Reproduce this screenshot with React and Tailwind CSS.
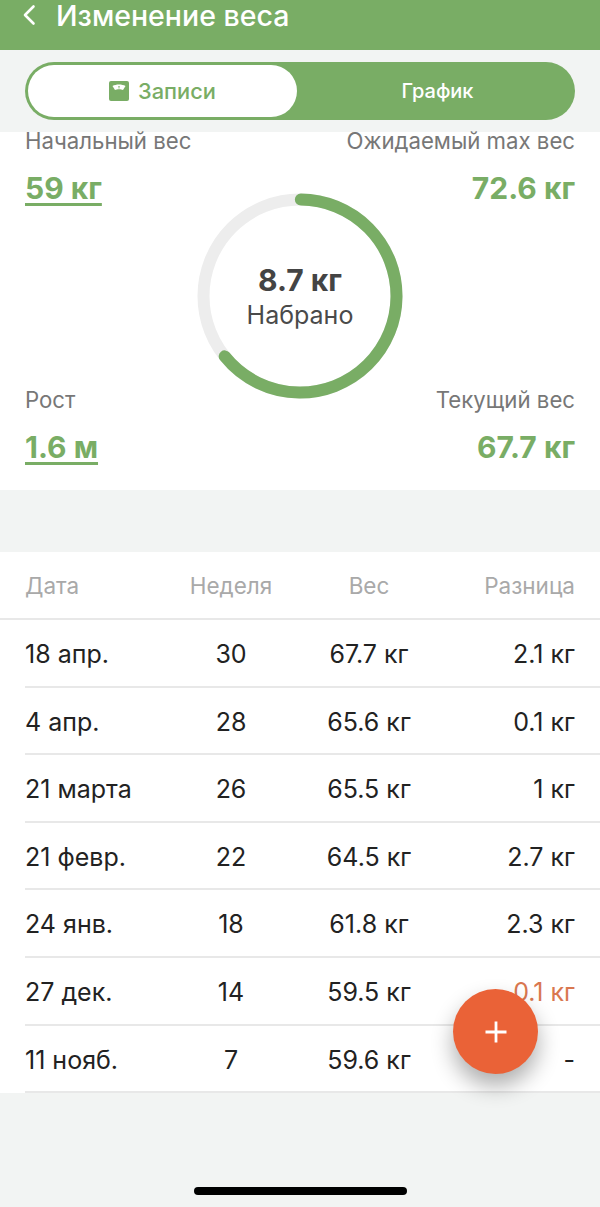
const rows = [
  ["18 апр.", "30", "67.7 кг", "2.1 кг"],
  ["4 апр.", "28", "65.6 кг", "0.1 кг"],
  ["21 марта", "26", "65.5 кг", "1 кг"],
  ["21 февр.", "22", "64.5 кг", "2.7 кг"],
  ["24 янв.", "18", "61.8 кг", "2.3 кг"],
  ["27 дек.", "14", "59.5 кг", "0.1 кг", true],
  ["11 нояб.", "7", "59.6 кг", "-"],
];

function Ring() {
  const r = 96.5;
  const c = 2 * Math.PI * r;
  return (
    <div className="relative h-[206px] w-[206px] shrink-0">
      <svg width="206" height="206" viewBox="0 0 206 206">
        <circle cx="103" cy="103" r={r} fill="none" stroke="#ededed" strokeWidth="12" />
        <circle
          cx="103"
          cy="103"
          r={r}
          fill="none"
          stroke="#79ad65"
          strokeWidth="12"
          strokeLinecap="round"
          strokeDasharray={`${c * 0.64} ${c}`}
          transform="rotate(-89.5 103 103)"
        />
      </svg>
      <div className="absolute inset-0 flex flex-col items-center justify-center pt-[3px]">
        <div className="text-[30px] leading-[34px] font-bold text-[#444444]">8.7 кг</div>
        <div className="text-[25px] leading-[36px] text-[#4a4a4a]">Набрано</div>
      </div>
    </div>
  );
}

function Stat({ label, value, right, link, top }) {
  return (
    <div className={(right ? "text-right " : "text-left ") + (top ? "-mt-[1px]" : "")}>
      <div className="text-[22.2px] leading-[20px] text-[#777777] whitespace-nowrap">{label}</div>
      <div
        className={
          "mt-[17px] text-[30px] leading-[40px] font-bold text-[#79ad65] whitespace-nowrap " +
          (link ? "underline decoration-[3px] underline-offset-[4px]" : "")
        }
      >
        {value}
      </div>
    </div>
  );
}

export default function App() {
  return (
    <div className="flex h-[1207px] w-[600px] flex-col overflow-hidden bg-[#f2f4f3] font-['Inter','Noto_Sans',sans-serif]">
      <header className="flex h-[50px] shrink-0 items-start bg-[#79ad65] pl-[21px]">
        <svg width="16" height="24" viewBox="0 0 16 24" className="mt-[3px]" fill="none">
          <path d="M12.5 3.5 L4 12 L12.5 20.5" stroke="white" strokeWidth="2.6" strokeLinecap="round" strokeLinejoin="round" />
        </svg>
        <h1 className="ml-[19px] text-[28.5px] leading-[32px] font-medium text-white">Изменение веса</h1>
      </header>

      <div className="flex h-[82px] shrink-0 items-start px-[25px] pt-[12px]">
        <div className="flex h-[58px] w-full rounded-full bg-[#79ad65] p-[3px]">
          <div className="flex w-[269px] items-center justify-center gap-[9px] rounded-full bg-white">
            <svg width="20" height="20" viewBox="0 0 20 20">
              <rect width="20" height="20" rx="2" fill="#79ad65" />
              <path d="M3.5 5 C7 3 13 3 16.5 5 L14 9 C12 8 8 8 6 9 Z" fill="white" />
              <path d="M10 8.5 L10.7 5 L9.3 5 Z" fill="#79ad65" />
            </svg>
            <span className="text-[21.8px] font-medium text-[#79ad65]">Записи</span>
          </div>
          <div className="flex flex-1 items-center justify-center pl-[6px]">
            <span className="text-[20px] font-medium text-white">График</span>
          </div>
        </div>
      </div>

      <section className="flex h-[358px] shrink-0 justify-between bg-white px-[25px]">
        <div className="flex w-[170px] flex-col justify-between pb-[23px]">
          <Stat label="Начальный вес" value="59 кг" link top />
          <Stat label="Рост" value="1.6 м" link />
        </div>
        <div className="pt-[61px]">
          <Ring />
        </div>
        <div className="flex w-[170px] flex-col items-end justify-between pb-[23px]">
          <Stat label="Ожидаемый max вес" value="72.6 кг" right top />
          <Stat label="Текущий вес" value="67.7 кг" right />
        </div>
      </section>

      <div className="h-[62px] shrink-0" />

      <section className="relative shrink-0 bg-white">
        <div className="grid h-[68px] grid-cols-[156px_100px_176px_1fr] items-center border-b-2 border-[#e8e8e8] pt-[2px] pr-[25px] pl-[25px] text-[22.5px] text-[#a9a9a9]">
          <div>Дата</div>
          <div className="text-center">Неделя</div>
          <div className="text-center">Вес</div>
          <div className="text-right">Разница</div>
        </div>
        {rows.map((row) => (
          <div
            key={row[0]}
            className="ml-[25px] grid h-[67.6px] grid-cols-[156px_100px_176px_1fr] items-center border-b-2 border-[#e8e8e8] pt-[4px] pr-[25px] text-[25px] text-[#222222]"
          >
            <div>{row[0]}</div>
            <div className="text-center">{row[1]}</div>
            <div className="text-center">{row[2]}</div>
            <div className={"text-right " + (row[4] ? "text-[#d9774f]" : "")}>{row[3]}</div>
          </div>
        ))}
        <button className="absolute top-[437px] left-[453px] flex h-[85px] w-[85px] items-center justify-center rounded-full bg-[#ea6237] shadow-[0_12px_22px_rgba(0,0,0,0.32)]">
          <svg width="24" height="24" viewBox="0 0 24 24" fill="none">
            <path d="M12 1.5 V22.5 M1.5 12 H22.5" stroke="white" strokeWidth="2.8" />
          </svg>
        </button>
      </section>

      <div className="flex flex-1 items-end justify-center pb-[12px]">
        <div className="h-[8px] w-[213px] rounded-full bg-black" />
      </div>
    </div>
  );
}
